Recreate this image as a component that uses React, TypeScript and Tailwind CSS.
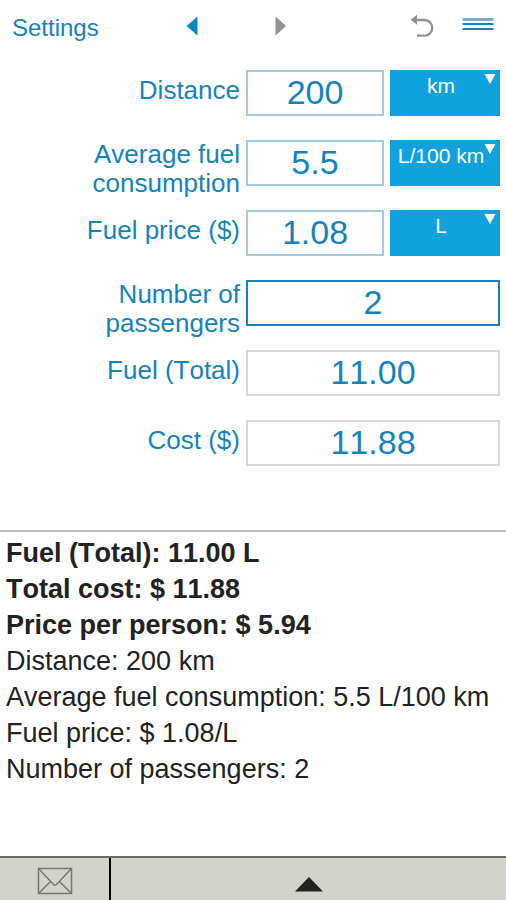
import React, { useState } from "react";

interface UnitSelectProps {
  label: string;
  value: string;
  options: string[];
  onChange: (value: string) => void;
}

const DISTANCE_UNITS = ["km", "mi"];
const CONSUMPTION_UNITS = ["L/100 km", "mpg"];
const VOLUME_UNITS = ["L", "gal"];

const LABEL_CLASS =
  "flex min-h-10 items-center justify-end text-right text-[26px] leading-[29px]";
const FIELD_CLASS =
  "h-[46px] w-full min-w-0 bg-white pb-0.5 text-center text-[34px] outline-none";

function UnitSelect({ label, value, options, onChange }: UnitSelectProps) {
  return (
    <div className="relative h-[46px]">
      <select
        aria-label={label}
        value={value}
        onChange={(e) => onChange(e.target.value)}
        className="h-full w-full appearance-none bg-[#10a1df] pr-2 pb-4 text-center text-[21px] text-white outline-none"
      >
        {options.map((option) => (
          <option key={option}>{option}</option>
        ))}
      </select>
      <svg
        viewBox="0 0 12 10"
        className="pointer-events-none absolute top-1 right-1 h-[10px] w-3 fill-white"
      >
        <path d="M0.5 0h11L6 10z" />
      </svg>
    </div>
  );
}

export default function App() {
  const [distance, setDistance] = useState("200");
  const [consumption, setConsumption] = useState("5.5");
  const [price, setPrice] = useState("1.08");
  const [passengers, setPassengers] = useState("2");
  const [distanceUnit, setDistanceUnit] = useState("km");
  const [consumptionUnit, setConsumptionUnit] = useState("L/100 km");
  const [volumeUnit, setVolumeUnit] = useState("L");

  const fuel =
    consumptionUnit === "mpg"
      ? Number(distance) / (Number(consumption) || 1)
      : (Number(distance) * Number(consumption)) / 100;
  const cost = fuel * Number(price);
  const perPerson = cost / (Number(passengers) || 1);

  return (
    <div className="flex min-h-screen flex-col bg-white font-['Liberation_Sans',Arial,sans-serif] text-[#1583bb] [font-kerning:none]">
      {/* Toolbar */}
      <header className="grid h-[70px] grid-cols-[1fr_90px_88px_109px_72px] items-start pt-3">
        <button className="h-8 pl-3 text-left text-2xl">Settings</button>
        <button aria-label="Previous" className="flex h-7 items-center justify-center">
          <svg viewBox="0 0 12 20" className="h-5 w-3" fill="#1187c2">
            <path d="M11.5 0.5v19L0.5 10z" />
          </svg>
        </button>
        <button aria-label="Next" className="flex h-7 items-center justify-center">
          <svg viewBox="0 0 12 20" className="h-5 w-3" fill="#929292">
            <path d="M0.5 0.5v19L11 10z" />
          </svg>
        </button>
        <button aria-label="Undo" className="flex h-7 items-center justify-end">
          <svg viewBox="0 0 24 24" className="size-6" fill="none">
            <path
              d="M5 6h9.5a7.8 7.8 0 0 1 0 15.6H7"
              stroke="#929292"
              strokeWidth="2.3"
            />
            <path d="M0.5 5.8l6.5-5v10z" fill="#929292" />
          </svg>
        </button>
        <button aria-label="Menu" className="flex h-6 items-center justify-end pr-3">
          <svg viewBox="0 0 32 14" className="h-[14px] w-8">
            <path d="M0.5 2.5h31" stroke="#7aadd0" strokeWidth="3" />
            <path d="M0.5 7h31M0.5 12h31" stroke="#1683b8" strokeWidth="2" />
          </svg>
        </button>
      </header>

      {/* Form */}
      <form className="mb-10 grid auto-rows-[70px] grid-cols-[1fr_138px_110px] items-start gap-x-1.5 pr-1.5">
        <label htmlFor="distance" className={LABEL_CLASS}>
          Distance
        </label>
        <input
          id="distance"
          value={distance}
          onChange={(e) => setDistance(e.target.value)}
          className={`${FIELD_CLASS} border-2 border-[#a3cbdf]`}
        />
        <UnitSelect
          label="Distance unit"
          value={distanceUnit}
          options={DISTANCE_UNITS}
          onChange={setDistanceUnit}
        />

        <label htmlFor="consumption" className={LABEL_CLASS}>
          Average fuel consumption
        </label>
        <input
          id="consumption"
          value={consumption}
          onChange={(e) => setConsumption(e.target.value)}
          className={`${FIELD_CLASS} border-2 border-[#a3cbdf]`}
        />
        <UnitSelect
          label="Consumption unit"
          value={consumptionUnit}
          options={CONSUMPTION_UNITS}
          onChange={setConsumptionUnit}
        />

        <label htmlFor="price" className={LABEL_CLASS}>
          Fuel price ($)
        </label>
        <input
          id="price"
          value={price}
          onChange={(e) => setPrice(e.target.value)}
          className={`${FIELD_CLASS} border-2 border-[#a3cbdf]`}
        />
        <UnitSelect
          label="Volume unit"
          value={volumeUnit}
          options={VOLUME_UNITS}
          onChange={setVolumeUnit}
        />

        <label htmlFor="passengers" className={LABEL_CLASS}>
          Number of passengers
        </label>
        <input
          id="passengers"
          value={passengers}
          onChange={(e) => setPassengers(e.target.value)}
          className={`${FIELD_CLASS} col-span-2 border-2 border-[#1b80b5]`}
        />

        <label htmlFor="fuel" className={LABEL_CLASS}>
          Fuel (Total)
        </label>
        <input
          id="fuel"
          readOnly
          value={fuel.toFixed(2)}
          className={`${FIELD_CLASS} col-span-2 border-2 border-[#d6d6d6]`}
        />

        <label htmlFor="cost" className={LABEL_CLASS}>
          Cost ($)
        </label>
        <input
          id="cost"
          readOnly
          value={cost.toFixed(2)}
          className={`${FIELD_CLASS} col-span-2 border-2 border-[#d6d6d6]`}
        />
      </form>

      {/* Summary */}
      <section className="flex-1 border-t-2 border-[#bdbdbd] px-1.5 pt-[3px] text-[27px] leading-9 text-[#222]">
        <div className="font-bold">
          <p>
            Fuel (Total): {fuel.toFixed(2)} {volumeUnit}
          </p>
          <p>Total cost: $ {cost.toFixed(2)}</p>
          <p>Price per person: $ {perPerson.toFixed(2)}</p>
        </div>
        <p>
          Distance: {distance} {distanceUnit}
        </p>
        <p>
          Average fuel consumption: {consumption} {consumptionUnit}
        </p>
        <p>
          Fuel price: $ {price}/{volumeUnit}
        </p>
        <p>Number of passengers: {passengers}</p>
      </section>

      {/* Bottom bar */}
      <footer className="flex h-11 border-t-2 border-[#6c6c68] bg-[#d2d3cb]">
        <button
          aria-label="Send by email"
          className="flex w-[111px] items-center justify-center border-r-2 border-black pt-1"
        >
          <svg
            viewBox="0 0 36 28"
            className="h-7 w-9"
            fill="none"
            stroke="#77786f"
            strokeWidth="1.5"
          >
            <path d="M1.5 1.5h33v25h-33z" />
            <path d="M1.5 1.5L16.5 17.5q1.5 1.5 3 0L34.5 1.5M1.5 26.5L13.5 14.5M34.5 26.5L22.5 14.5" />
          </svg>
        </button>
        <button
          aria-label="Expand summary"
          className="flex flex-1 items-end justify-center pb-2"
        >
          <svg viewBox="0 0 28 16" className="h-4 w-7" fill="#222">
            <path d="M14 1l14 14.5H0z" />
          </svg>
        </button>
      </footer>
    </div>
  );
}
